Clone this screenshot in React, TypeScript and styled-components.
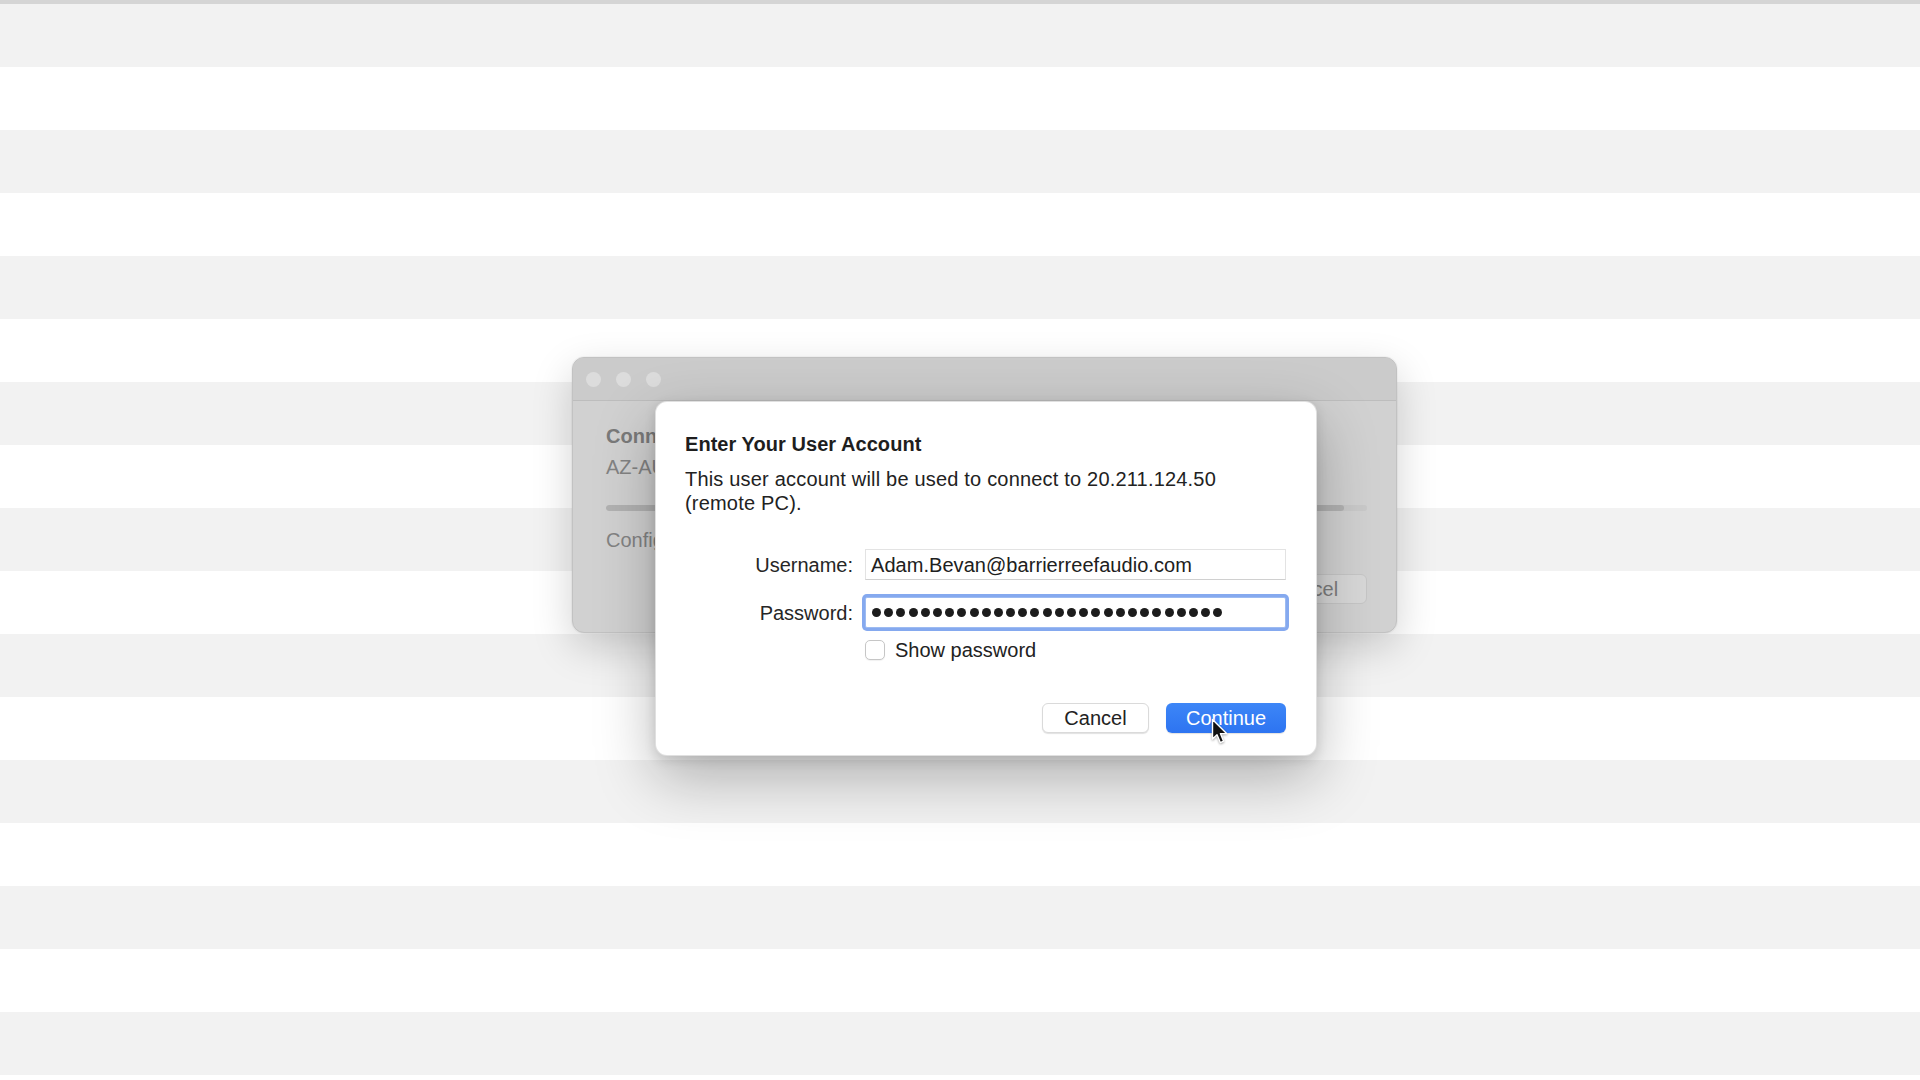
import React from "react";
import styled, { createGlobalStyle } from "styled-components";

const GlobalStyle = createGlobalStyle`
    html,
    body {
        margin: 0;
        padding: 0;
        background: #ffffff;
    }

    body {
        font-family: "Liberation Sans", Arial, sans-serif;
        -webkit-font-smoothing: antialiased;
    }
`;

const Desktop = styled.div`
    position: relative;
    width: 1920px;
    height: 1080px;
    overflow: hidden;
    border-top: 4px solid #d5d5d5;
    box-sizing: border-box;
    background: repeating-linear-gradient(
        to bottom,
        #f2f2f2 0px,
        #f2f2f2 63px,
        #ffffff 63px,
        #ffffff 126px
    );
`;

/* window behind the sheet, dimmed */
const BackWindow = styled.div`
    position: absolute;
    left: 572px;
    top: 353px;
    width: 825px;
    height: 276px;
    border-radius: 12px;
    background: #d1d1d1;
    border: 1px solid #c2c2c2;
    box-sizing: border-box;
    box-shadow: 0 14px 40px rgba(0, 0, 0, 0.18), 0 0 0 1px rgba(0, 0, 0, 0.03);
    overflow: hidden;
    display: flex;
    flex-direction: column;
`;

const TitleBar = styled.div`
    height: 43px;
    flex: none;
    display: flex;
    align-items: center;
    gap: 15px;
    padding-left: 13px;
    background: #cbcbcb;
    border-bottom: 1px solid #bdbdbd;
    box-sizing: border-box;
`;

const TrafficLight = styled.span`
    width: 15px;
    height: 15px;
    border-radius: 50%;
    background: #dcdcdc;
`;

const WindowBody = styled.div`
    flex: 1;
    padding: 23px 29px 0 33px;
    display: flex;
    flex-direction: column;
    color: #838383;
    font-size: 20px;
    line-height: 24px;
`;

const WindowLine = styled.div<{ $gap?: number; $bold?: boolean }>`
    margin-top: ${({ $gap }) => $gap ?? 0}px;
    white-space: nowrap;
    font-weight: ${({ $bold }) => ($bold ? 700 : 400)};
    color: ${({ $bold }) => ($bold ? "#7a7a7a" : "#838383")};
`;

const Progress = styled.div`
    margin-top: 26px;
    height: 6px;
    border-radius: 3px;
    background: #c9c9c9;
    width: 761px;
    overflow: hidden;
`;

const ProgressFill = styled.div`
    height: 100%;
    background: #b2b2b2;
    border-radius: 3px;
`;

const WindowFooter = styled.div`
    margin-top: 22px;
    display: flex;
    justify-content: flex-end;
    width: 761px;
`;

const GhostButton = styled.div`
    width: 120px;
    height: 30px;
    border-radius: 6px;
    background: #d8d8d8;
    border: 1px solid #c6c6c6;
    box-sizing: border-box;
    display: flex;
    align-items: center;
    justify-content: center;
    color: #7d7d7d;
`;

/* the sheet */
const Dialog = styled.div`
    position: absolute;
    left: 655px;
    top: 397px;
    width: 662px;
    box-sizing: border-box;
    padding: 30px 30px 22px 29px;
    background: #ffffff;
    border-radius: 12px;
    border: 1px solid rgba(0, 0, 0, 0.12);
    box-shadow: 0 22px 60px rgba(0, 0, 0, 0.28), 0 4px 12px rgba(0, 0, 0, 0.12);
    color: #202020;
    font-size: 20px;
    line-height: 24px;
`;

const Title = styled.div`
    font-weight: 700;
    color: #1e1e1e;
    letter-spacing: 0.05px;
`;

const Message = styled.p`
    margin: 11px 0 0;
    color: #222222;
    letter-spacing: 0.19px;
`;

const FormGrid = styled.div`
    margin-top: 34px;
    display: grid;
    grid-template-columns: 168px 1fr;
    column-gap: 12px;
    row-gap: 17px;
    align-items: center;
`;

const Label = styled.label`
    text-align: right;
    color: #262626;
`;

const Field = styled.div<{ $focused?: boolean }>`
    height: 31px;
    box-sizing: border-box;
    display: flex;
    align-items: center;
    padding-left: 5px;
    background: #ffffff;
    border: 1px solid ${({ $focused }) => ($focused ? "#9dbbf1" : "#e3e3e3")};
    border-bottom-color: ${({ $focused }) => ($focused ? "#9dbbf1" : "#d0d0d0")};
    box-shadow: ${({ $focused }) => ($focused ? "0 0 0 3px #85a9ef" : "none")};
    border-radius: ${({ $focused }) => ($focused ? "2px" : "0")};
    color: #202020;
    white-space: nowrap;
    letter-spacing: 0.05px;
`;

const Dots = styled.div`
    display: flex;
    gap: 3.2px;
    padding-left: 1px;
`;

const Dot = styled.span`
    width: 9px;
    height: 9px;
    border-radius: 50%;
    background: #1c1c1c;
`;

const CheckRow = styled.label`
    margin: 12px 0 0 180px;
    display: flex;
    align-items: center;
    gap: 10px;
    height: 20px;
    color: #222222;
`;

const CheckBox = styled.span`
    width: 20px;
    height: 20px;
    box-sizing: border-box;
    border: 1px solid #c6c6c6;
    border-radius: 5px;
    background: #ffffff;
    box-shadow: 0 1px 1px rgba(0, 0, 0, 0.06);
`;

const Buttons = styled.div`
    margin-top: 43px;
    display: flex;
    justify-content: flex-end;
    gap: 17px;
`;

const Button = styled.button<{ $primary?: boolean }>`
    height: 30px;
    padding: 0;
    width: ${({ $primary }) => ($primary ? "120px" : "107px")};
    border-radius: 6px;
    font-family: inherit;
    font-size: 20px;
    line-height: 24px;
    cursor: default;
    color: ${({ $primary }) => ($primary ? "#ffffff" : "#222222")};
    background: ${({ $primary }) =>
        $primary ? "linear-gradient(to bottom, #3d86f7, #2d74f1)" : "#ffffff"};
    border: ${({ $primary }) => ($primary ? "none" : "1px solid #dadada")};
    box-shadow: 0 1px 1px rgba(0, 0, 0, 0.12);
`;

const Pointer = styled.svg`
    position: absolute;
    left: 1211px;
    top: 714px;
    pointer-events: none;
    filter: drop-shadow(0 1px 1px rgba(0, 0, 0, 0.35));
`;

const PASSWORD_LENGTH = 29;

export default function App() {
    return (
        <>
            <GlobalStyle />
            <Desktop>
                <BackWindow>
                    <TitleBar>
                        <TrafficLight />
                        <TrafficLight />
                        <TrafficLight />
                    </TitleBar>
                    <WindowBody>
                        <WindowLine $bold>Connecting</WindowLine>
                        <WindowLine $gap={7}>AZ-AUE</WindowLine>
                        <Progress>
                            <ProgressFill style={{ width: "97%" }} />
                        </Progress>
                        <WindowLine $gap={17}>Configuring</WindowLine>
                        <WindowFooter>
                            <GhostButton>Cancel</GhostButton>
                        </WindowFooter>
                    </WindowBody>
                </BackWindow>

                <Dialog>
                    <Title>Enter Your User Account</Title>
                    <Message>
                        This user account will be used to connect to 20.211.124.50
                        <br />
                        (remote PC).
                    </Message>
                    <FormGrid>
                        <Label>Username:</Label>
                        <Field>Adam.Bevan@barrierreefaudio.com</Field>
                        <Label>Password:</Label>
                        <Field $focused>
                            <Dots>
                                {Array.from({ length: PASSWORD_LENGTH }, (_, i) => (
                                    <Dot key={i} />
                                ))}
                            </Dots>
                        </Field>
                    </FormGrid>
                    <CheckRow>
                        <CheckBox />
                        Show password
                    </CheckRow>
                    <Buttons>
                        <Button>Cancel</Button>
                        <Button $primary>Continue</Button>
                    </Buttons>
                </Dialog>

                <Pointer width="19" height="27" viewBox="0 0 19 27">
                    <path
                        d="M1.5 1.5 L1.5 21 L6 16.8 L9.3 24.6 L12.6 23.2 L9.4 15.6 L15.6 15.6 Z"
                        fill="#111111"
                        stroke="#ffffff"
                        strokeWidth="1.4"
                        strokeLinejoin="round"
                    />
                </Pointer>
            </Desktop>
        </>
    );
}
